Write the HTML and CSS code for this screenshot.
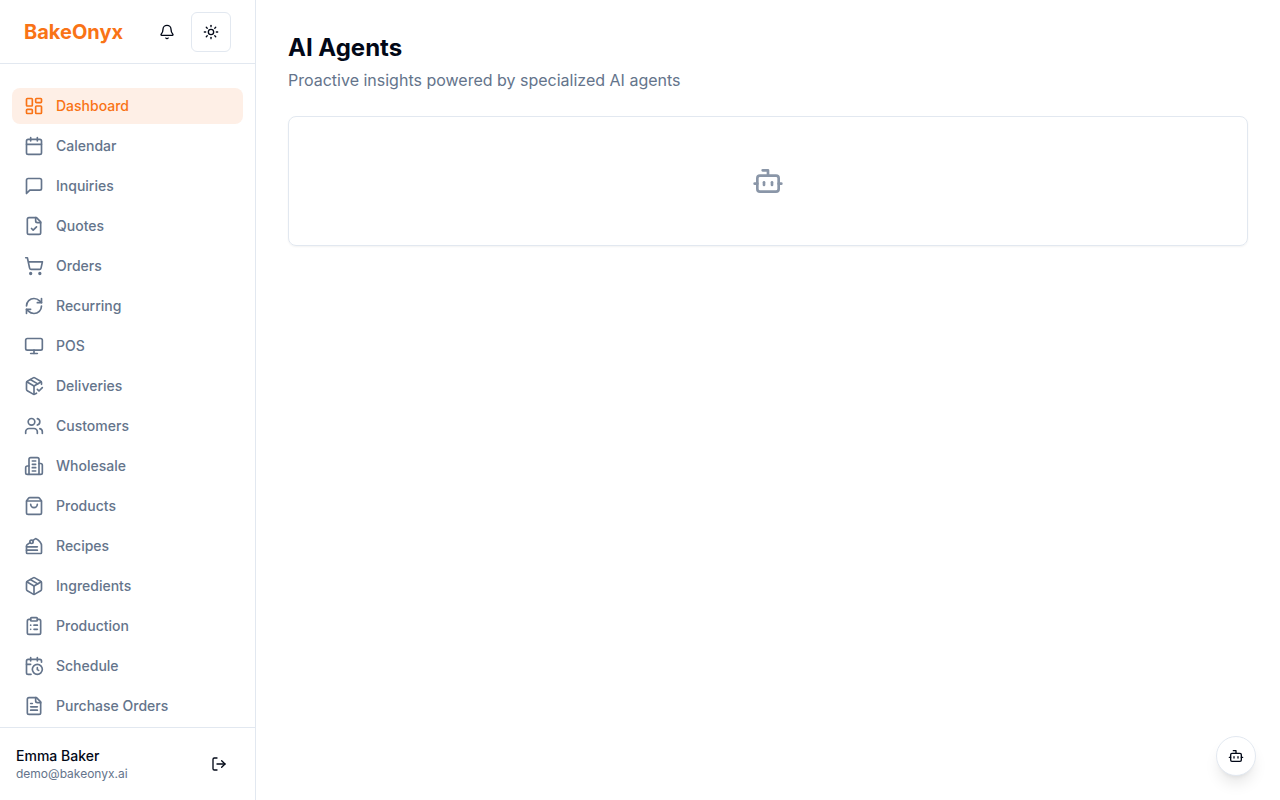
FILE: index.html
```html
<!DOCTYPE html>
<html lang="en">
<head>
<meta charset="utf-8">
<meta name="viewport" content="width=device-width, initial-scale=1">
<title>AI Agents - BakeOnyx</title>
<link rel="stylesheet" href="styles.css">
</head>
<body>
<div class="app">
  <aside class="sidebar">
    <div class="sidebar-header">
      <a class="brand" href="#">BakeOnyx</a>
      <div class="header-actions">
        <button class="icon-button" type="button" aria-label="Notifications">
          <svg class="icon" viewBox="0 0 24 24"><path d="M10.268 21a2 2 0 0 0 3.464 0"/><path d="M3.262 15.326A1 1 0 0 0 4 17h16a1 1 0 0 0 .74-1.673C19.41 13.956 18 12.499 18 8A6 6 0 0 0 6 8c0 4.499-1.411 5.956-2.738 7.326"/></svg>
        </button>
        <button class="icon-button outlined" type="button" aria-label="Toggle theme">
          <svg class="icon" viewBox="0 0 24 24"><circle cx="12" cy="12" r="4"/><path d="M12 2v2"/><path d="M12 20v2"/><path d="m4.93 4.93 1.41 1.41"/><path d="m17.66 17.66 1.41 1.41"/><path d="M2 12h2"/><path d="M20 12h2"/><path d="m6.34 17.66-1.41 1.41"/><path d="m19.07 4.93-1.41 1.41"/></svg>
        </button>
      </div>
    </div>
    <nav class="nav" aria-label="Main">
      <a class="nav-item active" href="#"><svg class="icon" viewBox="0 0 24 24"><rect width="7" height="9" x="3" y="3" rx="1"/><rect width="7" height="5" x="14" y="3" rx="1"/><rect width="7" height="9" x="14" y="12" rx="1"/><rect width="7" height="5" x="3" y="16" rx="1"/></svg>Dashboard</a>
      <a class="nav-item" href="#"><svg class="icon" viewBox="0 0 24 24"><path d="M8 2v4"/><path d="M16 2v4"/><rect width="18" height="18" x="3" y="4" rx="2"/><path d="M3 10h18"/></svg>Calendar</a>
      <a class="nav-item" href="#"><svg class="icon" viewBox="0 0 24 24"><path d="M21 15a2 2 0 0 1-2 2H7l-4 4V5a2 2 0 0 1 2-2h14a2 2 0 0 1 2 2z"/></svg>Inquiries</a>
      <a class="nav-item" href="#"><svg class="icon" viewBox="0 0 24 24"><path d="M15 2H6a2 2 0 0 0-2 2v16a2 2 0 0 0 2 2h12a2 2 0 0 0 2-2V7Z"/><path d="M14 2v4a2 2 0 0 0 2 2h4"/><path d="m9 15 2 2 4-4"/></svg>Quotes</a>
      <a class="nav-item" href="#"><svg class="icon" viewBox="0 0 24 24"><circle cx="8" cy="21" r="1"/><circle cx="19" cy="21" r="1"/><path d="M2.05 2.05h2l2.66 12.42a2 2 0 0 0 2 1.58h9.78a2 2 0 0 0 1.95-1.57l1.65-7.43H5.12"/></svg>Orders</a>
      <a class="nav-item" href="#"><svg class="icon" viewBox="0 0 24 24"><path d="M3 12a9 9 0 0 1 9-9 9.75 9.75 0 0 1 6.74 2.74L21 8"/><path d="M21 3v5h-5"/><path d="M21 12a9 9 0 0 1-9 9 9.75 9.75 0 0 1-6.74-2.74L3 16"/><path d="M8 16H3v5"/></svg>Recurring</a>
      <a class="nav-item" href="#"><svg class="icon" viewBox="0 0 24 24"><rect width="20" height="14" x="2" y="3" rx="2"/><path d="M8 21h8"/><path d="M12 17v4"/></svg>POS</a>
      <a class="nav-item" href="#"><svg class="icon" viewBox="0 0 24 24"><path d="m16 16 2 2 4-4"/><path d="M21 10V8a2 2 0 0 0-1-1.73l-7-4a2 2 0 0 0-2 0l-7 4A2 2 0 0 0 3 8v8a2 2 0 0 0 1 1.73l7 4a2 2 0 0 0 2 0l2-1.14"/><path d="m7.5 4.27 9 5.15"/><path d="M3.29 7 12 12l8.71-5"/><path d="M12 22V12"/></svg>Deliveries</a>
      <a class="nav-item" href="#"><svg class="icon" viewBox="0 0 24 24"><path d="M16 21v-2a4 4 0 0 0-4-4H6a4 4 0 0 0-4 4v2"/><circle cx="9" cy="7" r="4"/><path d="M22 21v-2a4 4 0 0 0-3-3.87"/><path d="M16 3.13a4 4 0 0 1 0 7.75"/></svg>Customers</a>
      <a class="nav-item" href="#"><svg class="icon" viewBox="0 0 24 24"><path d="M6 22V4a2 2 0 0 1 2-2h8a2 2 0 0 1 2 2v18Z"/><path d="M6 12H4a2 2 0 0 0-2 2v6a2 2 0 0 0 2 2h2"/><path d="M18 9h2a2 2 0 0 1 2 2v9a2 2 0 0 1-2 2h-2"/><path d="M10 6h4"/><path d="M10 10h4"/><path d="M10 14h4"/><path d="M10 18h4"/></svg>Wholesale</a>
      <a class="nav-item" href="#"><svg class="icon" viewBox="0 0 24 24"><path d="M16 10a4 4 0 0 1-8 0"/><path d="M3.103 6.034h17.794"/><path d="M3.4 5.467a2 2 0 0 0-.4 1.2V20a2 2 0 0 0 2 2h14a2 2 0 0 0 2-2V6.667a2 2 0 0 0-.4-1.2l-2-2.667A2 2 0 0 0 17 2H7a2 2 0 0 0-1.6.8z"/></svg>Products</a>
      <a class="nav-item" href="#"><svg class="icon" viewBox="0 0 24 24"><path d="M16 13H3"/><path d="M16 17H3"/><path d="m7.2 7.9-3.388 2.5A2 2 0 0 0 3 12.01V20a1 1 0 0 0 1 1h16a1 1 0 0 0 1-1v-8.654c0-2-2.44-6.026-6.44-8.026a1 1 0 0 0-1.082.057L10.4 5.6"/><circle cx="9" cy="7" r="2"/></svg>Recipes</a>
      <a class="nav-item" href="#"><svg class="icon" viewBox="0 0 24 24"><path d="M11 21.73a2 2 0 0 0 2 0l7-4A2 2 0 0 0 21 16V8a2 2 0 0 0-1-1.73l-7-4a2 2 0 0 0-2 0l-7 4A2 2 0 0 0 3 8v8a2 2 0 0 0 1 1.73z"/><path d="M12 22V12"/><path d="M3.29 7 12 12l8.71-5"/><path d="m7.5 4.27 9 5.15"/></svg>Ingredients</a>
      <a class="nav-item" href="#"><svg class="icon" viewBox="0 0 24 24"><rect width="8" height="4" x="8" y="2" rx="1"/><path d="M16 4h2a2 2 0 0 1 2 2v14a2 2 0 0 1-2 2H6a2 2 0 0 1-2-2V6a2 2 0 0 1 2-2h2"/><path d="M12 11h4"/><path d="M12 16h4"/><path d="M8 11h.01"/><path d="M8 16h.01"/></svg>Production</a>
      <a class="nav-item" href="#"><svg class="icon" viewBox="0 0 24 24"><path d="M16 14v2.2l1.6 1"/><path d="M16 2v4"/><path d="M21 7.5V6a2 2 0 0 0-2-2H5a2 2 0 0 0-2 2v14a2 2 0 0 0 2 2h3.5"/><path d="M3 10h5"/><path d="M8 2v4"/><circle cx="16" cy="16" r="6"/></svg>Schedule</a>
      <a class="nav-item" href="#"><svg class="icon" viewBox="0 0 24 24"><path d="M15 2H6a2 2 0 0 0-2 2v16a2 2 0 0 0 2 2h12a2 2 0 0 0 2-2V7Z"/><path d="M14 2v4a2 2 0 0 0 2 2h4"/><path d="M10 9H8"/><path d="M16 13H8"/><path d="M16 17H8"/></svg>Purchase Orders</a>
    </nav>
    <div class="sidebar-footer">
      <div class="user">
        <div class="user-name">Emma Baker</div>
        <div class="user-email">demo@bakeonyx.ai</div>
      </div>
      <button class="icon-button" type="button" aria-label="Log out">
        <svg class="icon" viewBox="0 0 24 24"><path d="m16 17 5-5-5-5"/><path d="M21 12H9"/><path d="M9 21H5a2 2 0 0 1-2-2V5a2 2 0 0 1 2-2h4"/></svg>
      </button>
    </div>
  </aside>
  <main class="main">
    <header>
      <h1 class="title">AI Agents</h1>
      <p class="subtitle">Proactive insights powered by specialized AI agents</p>
    </header>
    <section class="card" aria-label="Loading agents" aria-busy="true">
      <svg class="icon card-icon" viewBox="0 0 24 24"><path d="M12 8V4H8"/><rect width="16" height="12" x="4" y="8" rx="2"/><path d="M2 14h2"/><path d="M20 14h2"/><path d="M15 13v2"/><path d="M9 13v2"/></svg>
    </section>
  </main>
  <button class="icon-button assistant" type="button" aria-label="Open assistant">
    <svg class="icon" viewBox="0 0 24 24"><path d="M12 8V4H8"/><rect width="16" height="12" x="4" y="8" rx="2"/><path d="M2 14h2"/><path d="M20 14h2"/><path d="M15 13v2"/><path d="M9 13v2"/></svg>
  </button>
</div>
</body>
</html>
```
FILE: styles.css
```css
:root {
  --foreground: #020817;
  --muted: #64748b;
  --border: #e2e8f0;
  --primary: #f97316;
}

* {
  box-sizing: border-box;
  margin: 0;
}

body {
  background: #fff;
  color: var(--foreground);
  font-family: Inter, "Liberation Sans", sans-serif;
  font-size: 16px;
  line-height: 24px;
}

a {
  color: inherit;
  text-decoration: none;
}

.app {
  display: flex;
  height: 100vh;
}

.icon {
  width: 16px;
  height: 16px;
  flex: none;
  fill: none;
  stroke: currentColor;
  stroke-width: 2;
  stroke-linecap: round;
  stroke-linejoin: round;
}

.icon-button {
  display: inline-flex;
  align-items: center;
  justify-content: center;
  flex: none;
  width: 40px;
  height: 40px;
  padding: 0;
  border: 0;
  border-radius: 6px;
  background: #fff;
  color: inherit;
  cursor: pointer;
}

.outlined {
  border: 1px solid var(--border);
}

.sidebar {
  display: flex;
  flex-direction: column;
  flex: none;
  width: 256px;
  border-right: 1px solid var(--border);
}

.sidebar-header {
  display: flex;
  align-items: center;
  justify-content: space-between;
  flex: none;
  height: 64px;
  padding: 0 24px;
  border-bottom: 1px solid var(--border);
}

.brand {
  color: var(--primary);
  font-size: 20px;
  font-weight: 700;
  line-height: 28px;
}

.header-actions {
  display: flex;
  gap: 4px;
}

.nav {
  display: flex;
  flex-direction: column;
  flex: 1;
  gap: 4px;
  min-height: 0;
  padding: 24px 12px 0;
  overflow-y: auto;
}

.nav-item {
  display: flex;
  align-items: center;
  flex: none;
  gap: 12px;
  padding: 8px 12px;
  border-radius: 8px;
  color: var(--muted);
  font-size: 14px;
  font-weight: 500;
  line-height: 20px;
}

.nav-item .icon {
  width: 20px;
  height: 20px;
}

.nav-item.active {
  background: #feefe6;
  color: var(--primary);
}

.sidebar-footer {
  display: flex;
  align-items: center;
  justify-content: space-between;
  flex: none;
  padding: 16px;
  border-top: 1px solid var(--border);
}

.user-name {
  font-size: 14px;
  font-weight: 500;
  line-height: 20px;
}

.user-email {
  color: var(--muted);
  font-size: 12px;
  line-height: 16px;
}

.main {
  display: flex;
  flex-direction: column;
  flex: 1;
  gap: 24px;
  min-width: 0;
  padding: 32px;
  overflow-y: auto;
}

.title {
  font-size: 24px;
  font-weight: 700;
  line-height: 32px;
}

.subtitle {
  margin-top: 4px;
  color: var(--muted);
}

.card {
  display: flex;
  justify-content: center;
  padding: 48px;
  border: 1px solid var(--border);
  border-radius: 8px;
  box-shadow: 0 1px 2px rgba(0, 0, 0, 0.05);
}

.card-icon {
  width: 32px;
  height: 32px;
  color: var(--muted);
  opacity: 0.75;
}

.assistant {
  position: fixed;
  right: 24px;
  bottom: 24px;
  border: 1px solid var(--border);
  border-radius: 50%;
  box-shadow: 0 10px 15px -3px rgba(0, 0, 0, 0.1), 0 4px 6px -4px rgba(0, 0, 0, 0.1);
}
```
